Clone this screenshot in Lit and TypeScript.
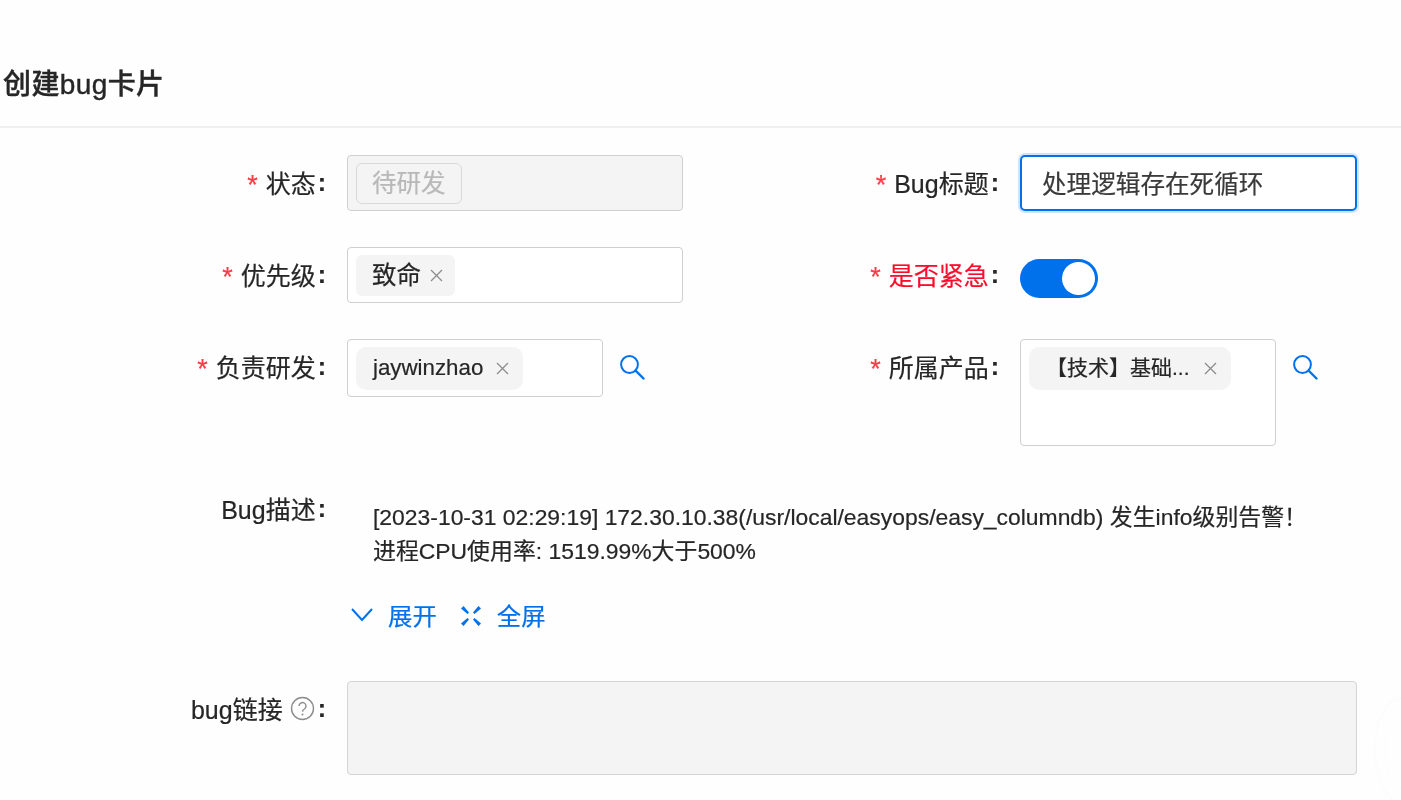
import { LitElement, html, css, svg } from "lit";
import { customElement } from "lit/decorators.js";

const closeIcon = html`<svg class="x" viewBox="0 0 13 13"><path d="M1 1l11 11M12 1l-11 11" fill="none" stroke="currentColor" stroke-width="1.3"/></svg>`;
const searchIcon = html`<svg class="search" viewBox="0 0 26 26"><circle cx="10.5" cy="10.5" r="8.4" fill="none" stroke="#0071eb" stroke-width="2"/><path d="M16.5 16.5l8 8" fill="none" stroke="#0071eb" stroke-width="2.4" stroke-linecap="round"/></svg>`;

@customElement("app-root")
export class AppRoot extends LitElement {
  static styles = css`
    :host {
      display: block;
      position: relative;
      height: 800px;
      overflow: hidden;
      background: #fefefe;
      color: #262626;
      font-family: "Liberation Sans", "Noto Sans CJK SC", sans-serif;
      font-size: 25px;
      -webkit-text-stroke: 0.2px currentColor;
      filter: blur(0.4px);
    }
    .title {
      height: 128px;
      box-sizing: border-box;
      padding: 65px 0 0 3px;
      font-size: 28px;
      line-height: 40px;
      font-weight: 500;
      letter-spacing: 0.4px;
      -webkit-text-stroke: 0.4px currentColor;
      border-bottom: 2px solid #f0f0f0;
    }
    .form {
      display: grid;
      grid-template-columns: 673px 728px;
      grid-template-rows: 56px 56px 106px;
      row-gap: 36px;
      padding-top: 27px;
    }
    .field { display: flex; align-items: flex-start; }
    .label {
      width: 326px;
      height: 54px;
      margin-right: 21px;
      flex: none;
      display: flex;
      justify-content: flex-end;
      align-items: center;
      white-space: nowrap;
    }
    .star { color: #ff3b47; margin-right: 8px; font-size: 27px; line-height: 1; padding-top: 6px; }
    .urgent { color: #fc0d2b; }
    .colon { margin-left: 2px; font-weight: 700; }
    .box {
      box-sizing: border-box;
      flex: none;
      width: 336px;
      height: 56px;
      border: 1.5px solid #cfcfcf;
      border-radius: 4px;
      padding: 6.5px 8px;
      background: #fff;
    }
    .short { width: 256px; height: 58px; }
    .tall { height: 107px; }
    .disabled { background: #f4f4f4; }
    .tag {
      display: inline-flex;
      align-items: center;
      box-sizing: border-box;
      height: 41.5px;
      padding: 0 12px 3px 16px;
      border-radius: 6px;
      background: #f4f4f4;
      white-space: nowrap;
      font-size: 24.5px;
    }
    .tag .x { margin-top: 3px; }
    .tag.off {
      color: #b8b8b8;
      border: 1.5px solid #d9d9d9;
      padding: 0 15px 3px;
    }
    .tag.latin { font-size: 22.3px; padding: 0 14px 0 17px; height: 43px; border-radius: 10px; }
    .tag.product { font-size: 21px; padding: 0 14px 5px 17px; height: 43px; border-radius: 10px; }
    .x { width: 13px; height: 13px; margin-left: 9px; color: #8c8c8c; }
    .tag.latin .x { margin: 0 0 0 13px; }
    .tag.product .x { margin: 5px 0 0 14px; }
    .search { width: 26px; height: 26px; margin: 15px 0 0 16px; flex: none; }
    .input {
      box-sizing: border-box;
      flex: none;
      width: 337px;
      height: 56px;
      border: 2px solid #0071eb;
      border-radius: 5px;
      box-shadow: 0 0 0 2px #cfe4fc;
      padding: 0 20px 2px;
      display: flex;
      align-items: center;
      background: #fff;
      color: #3a3a3a;
      font-size: 24.6px;
    }
    .switch-wrap { height: 56px; padding-top: 3px; display: flex; align-items: center; }
    .switch {
      box-sizing: border-box;
      width: 78px;
      height: 39px;
      border-radius: 20px;
      background: #0071eb;
      padding: 3px 3px 3px 42px;
    }
    .knob { width: 33px; height: 33px; border-radius: 50%; background: #fff; }
    .desc { display: flex; margin-top: 43px; }
    .desc .label { height: 40px; }
    .desc-body { padding: 0 0 0 26px; font-size: 22.9px; line-height: 34px; white-space: nowrap; margin-top: 12px; }
    .actions {
      display: flex;
      align-items: center;
      margin: 28px 0 0 351px;
      color: #0071eb;
      height: 36px;
      font-size: 24.4px;
    }
    .actions svg { width: 22px; height: 22px; margin-right: 15px; flex: none; }
    .actions svg.full { margin-top: 4px; margin-right: 15px; }
    .actions span { margin-right: 23px; }
    .link { display: flex; margin-top: 49px; }
    .link .label { height: 54px; }
    .help { width: 25px; height: 25px; margin-left: 7px; -webkit-text-stroke: 0; }
    .link .colon { margin-left: 3px; }
    .area {
      box-sizing: border-box;
      flex: none;
      width: 1010px;
      height: 94px;
      border: 1.5px solid #d4d4d4;
      border-radius: 4px;
      background: #f4f4f4;
    }
    .mark { position: absolute; right: 0; bottom: 0; width: 30px; height: 110px; }
  `;

  render() {
    return html`
      <div class="title">创建bug卡片</div>
      <div class="form">
        <div class="field">
          <div class="label"><span class="star">*</span>状态<span class="colon">:</span></div>
          <div class="box disabled"><span class="tag off">待研发</span></div>
        </div>
        <div class="field">
          <div class="label"><span class="star">*</span>Bug标题<span class="colon">:</span></div>
          <div class="input">处理逻辑存在死循环</div>
        </div>
        <div class="field">
          <div class="label"><span class="star">*</span>优先级<span class="colon">:</span></div>
          <div class="box"><span class="tag">致命${closeIcon}</span></div>
        </div>
        <div class="field">
          <div class="label"><span class="star">*</span><span class="urgent">是否紧急</span><span class="colon">:</span></div>
          <div class="switch-wrap"><div class="switch"><div class="knob"></div></div></div>
        </div>
        <div class="field">
          <div class="label"><span class="star">*</span>负责研发<span class="colon">:</span></div>
          <div class="box short"><span class="tag latin">jaywinzhao${closeIcon}</span></div>
          ${searchIcon}
        </div>
        <div class="field">
          <div class="label"><span class="star">*</span>所属产品<span class="colon">:</span></div>
          <div class="box short tall"><span class="tag product">【技术】基础...${closeIcon}</span></div>
          ${searchIcon}
        </div>
      </div>
      <div class="desc">
        <div class="label">Bug描述<span class="colon">:</span></div>
        <div class="desc-body">
          <div>[2023-10-31 02:29:19] 172.30.10.38(/usr/local/easyops/easy_columndb) 发生info级别告警！</div>
          <div>进程CPU使用率: 1519.99%大于500%</div>
        </div>
      </div>
      <div class="actions">
        <svg viewBox="0 0 22 22"><path d="M1 6l10 11 10-11" fill="none" stroke="currentColor" stroke-width="2"/></svg>
        <span>展开</span>
        <svg class="full" viewBox="0 0 22 22"><path fill="currentColor" d="M1 3.500L3.500 1 9 7.500 7.500 9zM21 3.500L18.500 1 13 7.500 14.500 9zM1 18.500L3.500 21 9 14.500 7.500 13zM21 18.500L18.500 21 13 14.500 14.500 13z"/></svg>
        <span>全屏</span>
      </div>
      <div class="link">
        <div class="label">bug链接
          <svg class="help" viewBox="0 0 25 25"><circle cx="12.5" cy="12.5" r="11" fill="none" stroke="#8c8c8c" stroke-width="1.4"/><path d="M9 10a3.500 3.500 0 1 1 5.400 3c-1.300.8-1.900 1.400-1.900 2.800" fill="none" stroke="#8c8c8c" stroke-width="1.4"/><circle cx="12.5" cy="18.600" r="1" fill="#8c8c8c"/></svg>
          <span class="colon">:</span></div>
        <div class="area"></div>
      </div>
      <svg class="mark" viewBox="0 0 30 110">
        ${svg`<ellipse cx="30" cy="60" rx="26" ry="52" fill="none" stroke="#fcfcfc" stroke-width="2"/><ellipse cx="30" cy="60" rx="16" ry="38" fill="none" stroke="#fdfdfd" stroke-width="2"/>`}
      </svg>
    `;
  }
}
